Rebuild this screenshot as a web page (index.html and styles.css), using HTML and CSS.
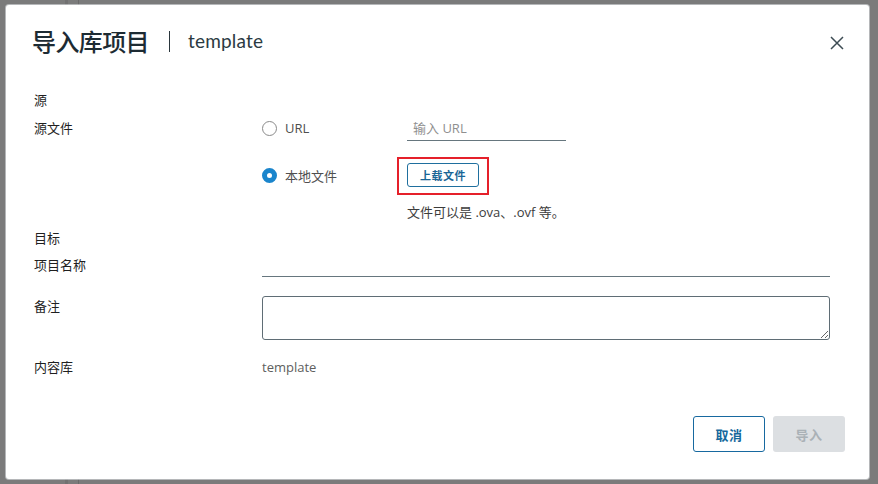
FILE: index.html
```html
<!DOCTYPE html>
<html lang="zh-CN">
<head>
<meta charset="utf-8">
<title>导入库项目</title>
<link rel="stylesheet" href="styles.css">
</head>
<body>
<div class="overlay">
  <div class="modal">
    <div class="header">
      <h1 class="title">导入库项目</h1>
      <span class="sep"></span>
      <span class="subtitle">template</span>
      <button class="close" aria-label="关闭">
        <svg width="14" height="14" viewBox="0 0 14 14"><path d="M1 1 L13 13 M13 1 L1 13" stroke="#3d4c54" stroke-width="1.5" fill="none"/></svg>
      </button>
    </div>
    <div class="content">
      <div class="section">源</div>
      <div class="row row-source">
        <div class="label lh24">源文件</div>
        <div class="controls">
          <div class="option">
            <span class="opt-label"><span class="radio"></span>URL</span>
            <input class="line-input url" type="text" placeholder="输入 URL">
          </div>
          <div class="option opt2">
            <span class="opt-label"><span class="radio checked"></span>本地文件</span>
            <span class="upload-wrap"><button class="btn-upload">上载文件</button></span>
          </div>
          <div class="hint">文件可以是 .ova、.ovf 等。</div>
        </div>
      </div>
      <div class="section section2">目标</div>
      <div class="row row-name">
        <div class="label lh24">项目名称</div>
        <input class="line-input wide" type="text">
      </div>
      <div class="row row-notes">
        <div class="label notes-label">备注</div>
        <textarea class="notes"></textarea>
      </div>
      <div class="row row-lib">
        <div class="label">内容库</div>
        <div class="value">template</div>
      </div>
    </div>
    <div class="footer">
      <button class="btn btn-outline">取消</button>
      <button class="btn btn-disabled" disabled>导入</button>
    </div>
  </div>
</div>
</body>
</html>
```

FILE: styles.css
```css
html, body {
  margin: 0;
  padding: 0;
}
body {
  width: 878px;
  height: 484px;
  overflow: hidden;
  font-family: "Open Sans", "Noto Sans CJK SC", sans-serif;
  background-color: #7b7b7b;
  background-image:
    linear-gradient(to right, transparent 65px, #717171 65px, #717171 68px, transparent 68px, transparent 78px, #6a6a6a 78px, #6a6a6a 79px, transparent 79px);
}
.overlay {
  padding: 5px 9px 5px 6px;
}
.modal {
  width: 863px;
  height: 474px;
  background: #fff;
  border-radius: 3px;
  box-shadow: 0 0 0 1px rgba(220, 224, 226, 0.6);
  display: flex;
  flex-direction: column;
  box-sizing: border-box;
}
.header {
  display: flex;
  align-items: center;
  padding: 24px 25px 0 26px;
  height: 24px;
  box-sizing: content-box;
}
.title {
  margin: 0;
  font-family: "Noto Sans CJK SC", sans-serif;
  font-size: 24px;
  line-height: 24px;
  font-weight: 500;
  color: #1d2b33;
  letter-spacing: -0.6px;
}
.sep {
  width: 1px;
  height: 21px;
  background: #2a363c;
  margin: 1px 18px 0 20px;
}
.subtitle {
  font-family: "Lato", sans-serif;
  font-size: 19px;
  line-height: 24px;
  color: #2b3a42;
  letter-spacing: 0.2px;
}
.close {
  margin-left: auto;
  margin-top: 3px;
  border: 0;
  background: none;
  padding: 0;
  width: 14px;
  height: 14px;
  display: flex;
}
.content {
  padding: 38px 39px 0 28px;
  font-size: 13px;
  color: #1f1f1f;
}
.section {
  line-height: 18px;
}
.section2 {
  margin-top: 8px;
}
.row {
  display: flex;
  align-items: flex-start;
}
.label {
  width: 228px;
  flex: none;
  line-height: 18px;
}
.lh24 {
  line-height: 24px;
}
.row-source {
  margin-top: 7px;
}
.controls {
  display: flex;
  flex-direction: column;
}
.option {
  display: flex;
  align-items: center;
  height: 24px;
}
.opt2 {
  margin-top: 23px;
}
.opt-label {
  width: 145px;
  display: flex;
  align-items: center;
  color: #4f4f4f;
}
.radio {
  width: 13px;
  height: 13px;
  border: 1px solid #8a8a8a;
  border-radius: 50%;
  margin-right: 8px;
  box-sizing: content-box;
}
.radio.checked {
  width: 5px;
  height: 5px;
  border: 5px solid #1a85cc;
  background: #fff;
}
.line-input {
  border: 0;
  border-bottom: 1px solid #66767e;
  outline: none;
  height: 25px;
  box-sizing: border-box;
  font-family: "Open Sans", "Noto Sans CJK SC", sans-serif;
  font-size: 13px;
  padding: 0 6px;
  background: transparent;
}
.url {
  width: 159px;
  margin-top: 1px;
}
.url::placeholder {
  color: #8f8f8f;
}
.upload-wrap {
  position: relative;
  display: flex;
}
.upload-wrap::after {
  content: "";
  position: absolute;
  left: -10px;
  right: -10px;
  top: -6px;
  bottom: -8px;
  border: 2px solid #e5202a;
}
.btn-upload {
  width: 72px;
  height: 24px;
  border: 1px solid #1f6f9e;
  border-radius: 3px;
  background: #fff;
  color: #1a6596;
  font-family: "Noto Sans CJK SC", sans-serif;
  font-size: 11px;
  font-weight: 700;
  letter-spacing: 0.5px;
  padding: 0;
}
.hint {
  margin-top: 16px;
  padding-left: 145px;
  line-height: 18px;
  color: #3c3c3c;
  font-size: 13px;
}
.row-name {
  margin-top: 6px;
}
.wide {
  width: 568px;
  margin-top: -1px;
}
.row-notes {
  margin-top: 19px;
}
.notes-label {
  padding-top: 1px;
}
.notes {
  width: 568px;
  height: 44px;
  box-sizing: border-box;
  border: 1px solid #5f6d75;
  border-radius: 3px;
  resize: vertical;
  margin: 0;
  font-family: inherit;
}
.row-lib {
  margin-top: 18px;
}
.value {
  line-height: 18px;
  color: #5e5e5e;
}
.footer {
  margin-top: auto;
  display: flex;
  justify-content: flex-end;
  gap: 8px;
  padding: 0 24px 27px 0;
}
.btn {
  width: 72px;
  height: 36px;
  border-radius: 3px;
  font-family: "Noto Sans CJK SC", sans-serif;
  font-size: 13px;
  font-weight: 700;
  letter-spacing: 0.5px;
  padding: 0;
}
.btn-outline {
  border: 1px solid #1769a0;
  background: #fff;
  color: #15689c;
}
.btn-disabled {
  border: 0;
  background: #dcdfe2;
  color: #aab1b6;
}
```
